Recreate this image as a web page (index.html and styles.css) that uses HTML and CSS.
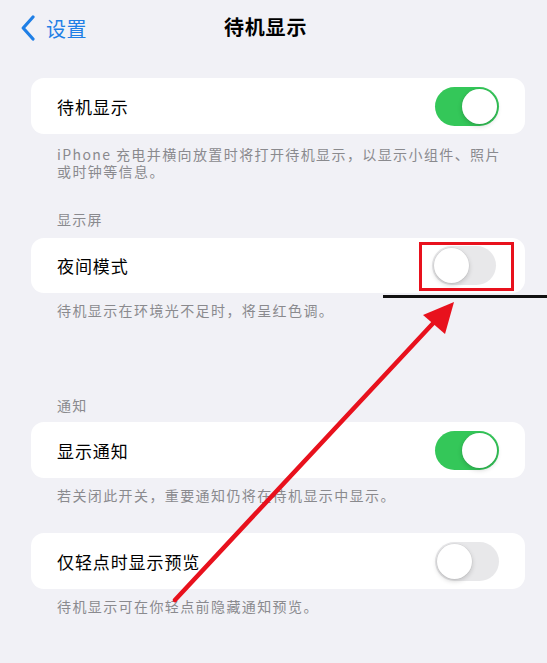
FILE: index.html
```html
<!DOCTYPE html>
<html lang="zh-CN">
<head>
<meta charset="utf-8">
<title>待机显示</title>
<link rel="stylesheet" href="styles.css">
</head>
<body>
<div class="page">
  <header class="nav">
    <a class="back">
      <svg class="chev" width="14" height="26" viewBox="0 0 14 26"><path d="M12 2 L2.2 13 L12 24" fill="none" stroke="#1f7fe6" stroke-width="3.2" stroke-linecap="round" stroke-linejoin="round"/></svg>
      <span>设置</span>
    </a>
    <h1 class="title">待机显示</h1>
  </header>

  <section class="group g1">
    <div class="card">
      <span class="label">待机显示</span>
      <span class="toggle on"><span class="knob"></span></span>
    </div>
    <p class="foot f1">iPhone 充电并横向放置时将打开待机显示，以显示小组件、照片<br>或时钟等信息。</p>
  </section>

  <section class="group g2">
    <p class="head">显示屏</p>
    <div class="card">
      <span class="label">夜间模式</span>
      <span class="toggle off shift"><span class="knob"></span></span>
    </div>
    <p class="foot">待机显示在环境光不足时，将呈红色调。</p>
  </section>

  <section class="group g3">
    <p class="head">通知</p>
    <div class="card">
      <span class="label">显示通知</span>
      <span class="toggle on"><span class="knob"></span></span>
    </div>
    <p class="foot">若关闭此开关，重要通知仍将在待机显示中显示。</p>
  </section>

  <section class="group g4">
    <div class="card">
      <span class="label">仅轻点时显示预览</span>
      <span class="toggle off"><span class="knob"></span></span>
    </div>
    <p class="foot">待机显示可在你轻点前隐藏通知预览。</p>
  </section>

  <svg class="annot" width="547" height="663" viewBox="0 0 547 663">
    <rect x="420.5" y="243.5" width="92" height="46" fill="none" stroke="#e8111d" stroke-width="3"/>
    <line x1="383" y1="296.5" x2="547" y2="296.5" stroke="#111" stroke-width="3"/>
    <line x1="175" y1="600" x2="438" y2="318" stroke="#e8111d" stroke-width="4.5" stroke-linecap="round"/>
    <polygon points="454,302 423,315 445,334" fill="#e8111d"/>
  </svg>
</div>
</body>
</html>
```

FILE: styles.css
```css
* { box-sizing: border-box; }
html, body {
  margin: 0;
  padding: 0;
  background: #f1f1f6;
}
body {
  font-family: "Noto Sans CJK SC", "Noto Sans", sans-serif;
  color: #000;
}
.page {
  position: relative;
  width: 547px;
  height: 663px;
  overflow: hidden;
  padding: 0 22px 0 31px;
}
.nav {
  height: 56px;
  display: flex;
  align-items: center;
  margin-left: -10px;
}
.back {
  display: flex;
  align-items: center;
  gap: 11px;
  color: #1f7fe6;
  font-size: 20px;
  letter-spacing: 0.5px;
  line-height: 1;
  padding-top: 1px;
}
.chev { display: block; margin-top: -1px; }
.title {
  margin: 0 0 0 137px;
  font-size: 20px;
  font-weight: 700;
  letter-spacing: 0.8px;
  line-height: 1;
  margin-top: -2px;
}
.group { display: flex; flex-direction: column; }
.g1 { margin-top: 22px; }
.g2 { margin-top: 31px; }
.g3 { margin-top: 78px; }
.g4 { margin-top: 29px; }
.card {
  background: #fff;
  border-radius: 13px;
  height: 56px;
  display: flex;
  align-items: center;
  justify-content: space-between;
  padding: 0 26px;
}
.g2 .card { height: 55px; }
.label {
  font-size: 17px;
  letter-spacing: 0.9px;
  line-height: 1;
}
.toggle {
  position: relative;
  width: 64px;
  height: 39px;
  border-radius: 20px;
  display: block;
}
.toggle.on { background: #34c759; }
.toggle.off { background: #e8e8ea; }
.toggle.shift { margin-right: 3px; }
.knob {
  position: absolute;
  top: 2px;
  width: 35px;
  height: 35px;
  border-radius: 50%;
  background: #fff;
  box-shadow: 0 2px 5px rgba(0,0,0,0.18), 0 0 0 0.5px rgba(0,0,0,0.06);
}
.on .knob { right: 2px; }
.off .knob { left: 2px; }
.foot {
  margin: 9px 0 0;
  padding-left: 26px;
  font-size: 14px;
  letter-spacing: 1.4px;
  line-height: 17px;
  color: #8a8a8e;
}
.foot.f1 { margin-top: 12px; }
.head {
  margin: 0 0 10px;
  padding-left: 26px;
  font-size: 14px;
  letter-spacing: 1.2px;
  line-height: 17px;
  color: #8a8a8e;
}
.g3 .head { margin-bottom: 8px; }
.annot {
  position: absolute;
  left: 0;
  top: 0;
  pointer-events: none;
}
```
